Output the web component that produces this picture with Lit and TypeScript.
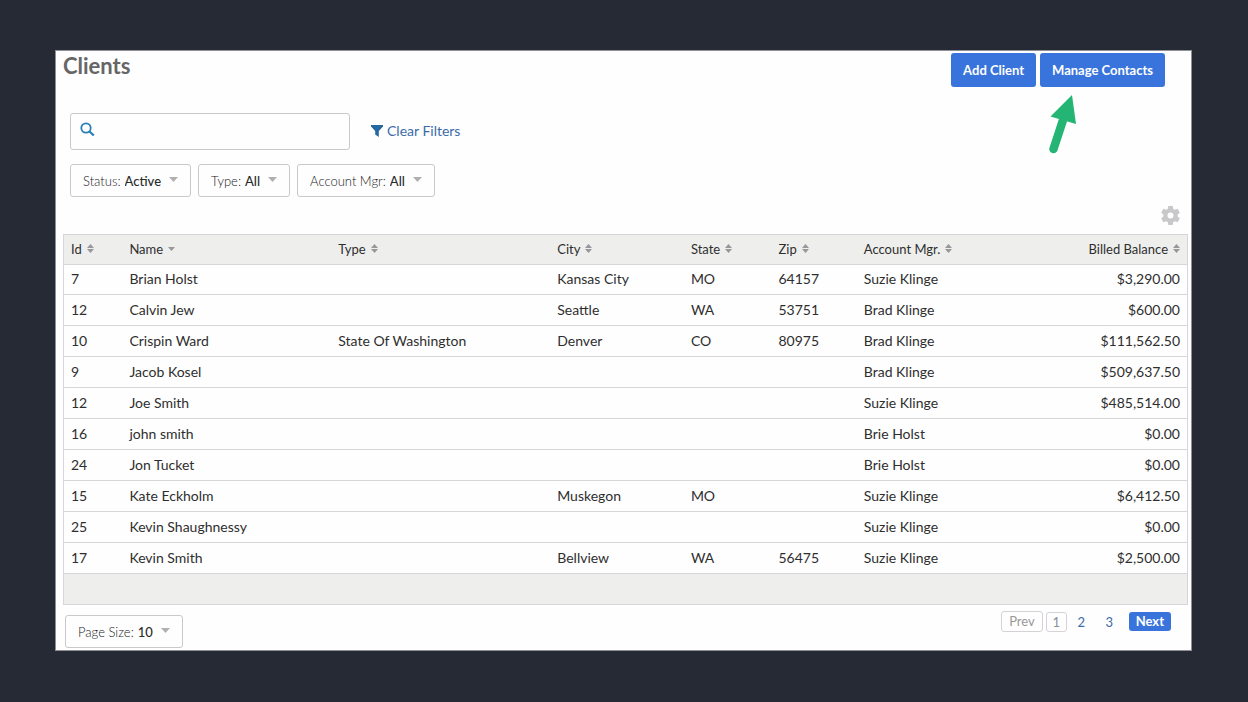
import { LitElement, html, svg, css, nothing } from "lit";
import { customElement, property, state } from "lit/decorators.js";

interface Client {
  id: number;
  name: string;
  type?: string;
  city?: string;
  state?: string;
  zip?: string;
  manager: string;
  balance: string;
}

const clients: Client[] = [
  { id: 7, name: "Brian Holst", city: "Kansas City", state: "MO", zip: "64157", manager: "Suzie Klinge", balance: "$3,290.00" },
  { id: 12, name: "Calvin Jew", city: "Seattle", state: "WA", zip: "53751", manager: "Brad Klinge", balance: "$600.00" },
  { id: 10, name: "Crispin Ward", type: "State Of Washington", city: "Denver", state: "CO", zip: "80975", manager: "Brad Klinge", balance: "$111,562.50" },
  { id: 9, name: "Jacob Kosel", manager: "Brad Klinge", balance: "$509,637.50" },
  { id: 12, name: "Joe Smith", manager: "Suzie Klinge", balance: "$485,514.00" },
  { id: 16, name: "john smith", manager: "Brie Holst", balance: "$0.00" },
  { id: 24, name: "Jon Tucket", manager: "Brie Holst", balance: "$0.00" },
  { id: 15, name: "Kate Eckholm", city: "Muskegon", state: "MO", manager: "Suzie Klinge", balance: "$6,412.50" },
  { id: 25, name: "Kevin Shaughnessy", manager: "Suzie Klinge", balance: "$0.00" },
  { id: 17, name: "Kevin Smith", city: "Bellview", state: "WA", zip: "56475", manager: "Suzie Klinge", balance: "$2,500.00" },
];

const columns = ["Id", "Name", "Type", "City", "State", "Zip", "Account Mgr.", "Billed Balance"];

@customElement("filter-select")
class FilterSelect extends LitElement {
  @property() label = "";
  @property() value = "";

  static styles = css`
    :host {
      display: block;
    }
    .box {
      display: flex;
      align-items: center;
      gap: 4px;
      height: 33px;
      box-sizing: border-box;
      padding: 0 12px;
      border: 1px solid #c9c9cb;
      border-radius: 3px;
      background: #fefefe;
      font-size: 13px;
      line-height: 16px;
      white-space: nowrap;
    }
    .name {
      font-weight: 300;
      color: #222;
    }
    .field {
      display: grid;
      align-items: center;
    }
    .field > * {
      grid-area: 1 / 1;
    }
    select {
      appearance: none;
      field-sizing: content;
      border: 0;
      margin: 0;
      padding: 0 17px 0 0;
      background: none;
      font: inherit;
      font-weight: 500;
      color: #2b2b2b;
      outline-offset: 4px;
    }
    .caret {
      justify-self: end;
      width: 9px;
      height: 5px;
      margin-bottom: 2px;
      fill: #b0b0b0;
      pointer-events: none;
    }
  `;

  render() {
    return html`
      <label class="box">
        <span class="name">${this.label}:</span>
        <span class="field">
          <select>
            <option>${this.value}</option>
          </select>
          <svg class="caret" viewBox="0 0 9 5" aria-hidden="true"><path d="M0 0h9L4.5 5z" /></svg>
        </span>
      </label>
    `;
  }
}

@customElement("app-root")
class AppRoot extends LitElement {
  @state() private page = 1;

  static styles = css`
    :host {
      display: block;
      min-height: 100vh;
      box-sizing: border-box;
      padding: 50px 56px 50px 55px;
      background: #262a35;
      font-family: Lato, "Open Sans", sans-serif;
      font-size: 14px;
      line-height: 18px;
      color: #2e2e2e;
    }
    .panel {
      background: #fefefe;
      border: 1px solid #8f9095;
      padding: 1px 3px 2px 7px;
    }
    .top {
      display: flex;
      justify-content: space-between;
      align-items: flex-start;
      padding-right: 23px;
    }
    h1 {
      margin: 0;
      font-size: 22px;
      line-height: 28px;
      font-weight: 700;
      color: #666;
    }
    .actions {
      display: flex;
      gap: 4px;
      padding-top: 1px;
    }
    .primary {
      border: 0;
      border-radius: 3px;
      background: #3874db;
      color: #fff;
      font: inherit;
      font-weight: 700;
      cursor: pointer;
    }
    .large {
      height: 34px;
      padding: 0 12px 1px;
      font-size: 13px;
    }
    .target {
      position: relative;
    }
    .pointer {
      position: absolute;
      left: 8px;
      top: 41px;
      width: 30px;
      height: 60px;
    }
    .search-row {
      display: flex;
      align-items: center;
      gap: 21px;
      padding: 26px 0 0 7px;
    }
    .search {
      display: flex;
      align-items: center;
      gap: 8px;
      box-sizing: border-box;
      width: 280px;
      height: 37px;
      padding: 0 9px;
      border: 1px solid #c9c9cb;
      border-radius: 3px;
    }
    .search svg {
      width: 15px;
      height: 15px;
      margin-bottom: 4px;
      flex: none;
    }
    .search input {
      flex: 1;
      min-width: 0;
      border: 0;
      padding: 0;
      outline: 0;
      background: none;
      font: inherit;
    }
    .clear {
      display: flex;
      align-items: center;
      gap: 4px;
      padding-bottom: 2px;
      color: #3c6ba8;
      text-decoration: none;
    }
    .clear svg {
      width: 12px;
      height: 12px;
      fill: #24689f;
    }
    .filters {
      display: flex;
      gap: 7px;
      padding: 14px 0 0 7px;
    }
    .settings {
      display: flex;
      justify-content: flex-end;
      padding: 9px 8px;
    }
    .settings button {
      display: block;
      border: 0;
      padding: 0;
      background: none;
      width: 19px;
      height: 19px;
      cursor: pointer;
    }
    .settings svg {
      display: block;
      width: 19px;
      height: 19px;
      fill: #c8c8ca;
    }
    table {
      width: 100%;
      table-layout: fixed;
      border-collapse: separate;
      border-spacing: 0;
      border: 1px solid #d5d6d9;
      border-bottom: 0;
    }
    th,
    td {
      box-sizing: border-box;
      height: 31px;
      padding: 0 7px 1px;
      border-bottom: 1px solid #d5d6d9;
      text-align: left;
      font-weight: 400;
      white-space: nowrap;
    }
    th,
    tbody tr:first-child td {
      height: 30px;
    }
    th {
      padding-bottom: 2px;
      background: #eeeeed;
      font-size: 13px;
    }
    tfoot td {
      background: #eeeeed;
    }
    .c0 { width: 5.2%; }
    .c1 { width: 18.6%; }
    .c2 { width: 19.5%; }
    .c3 { width: 11.9%; }
    .c4 { width: 7.8%; }
    .c5 { width: 7.6%; }
    .c6 { width: 14.4%; }
    .num {
      text-align: right;
    }
    .sort {
      display: inline-flex;
      align-items: center;
      gap: 5px;
      border: 0;
      padding: 0;
      background: none;
      font: inherit;
      color: inherit;
      cursor: pointer;
    }
    .sort svg {
      width: 7px;
      height: 9px;
      fill: #98989c;
    }
    .bottom {
      display: flex;
      justify-content: space-between;
      align-items: flex-start;
      padding: 6px 17px 0 2px;
    }
    .size {
      padding-top: 4px;
    }
    .pager {
      display: flex;
      align-items: center;
      gap: 3px;
      font-size: 13px;
    }
    .pager a {
      box-sizing: border-box;
      min-width: 21px;
      height: 20px;
      margin-right: 4px;
      border: 1px solid transparent;
      border-radius: 3px;
      text-align: center;
      text-decoration: none;
      color: #3c6ba8;
    }
    .pager a[aria-current] {
      border-color: #d5d2da;
      color: #8a8f9c;
      margin-right: 1px;
    }
    .prev {
      height: 21px;
      padding: 0 7px 1px;
      border: 1px solid #d5d2d6;
      border-radius: 3px;
      background: none;
      font: inherit;
      color: #999;
    }
    .next {
      height: 19px;
      padding: 0 7px 1px;
      margin-left: 2px;
    }
  `;

  private sortIcon(name: string) {
    return name === "Name"
      ? svg`<path d="M0 3h7L3.5 7z" />`
      : svg`<path d="M0 4L3.5 0L7 4zM0 5h7L3.5 9z" />`;
  }

  private go(e: Event, page: number) {
    e.preventDefault();
    this.page = page;
  }

  render() {
    return html`
      <main class="panel">
        <header class="top">
          <h1>Clients</h1>
          <div class="actions">
            <button class="primary large">Add Client</button>
            <button class="primary large target">
              Manage Contacts
              <svg class="pointer" viewBox="0 0 30 60" aria-hidden="true" fill="#24b574">
                <path d="M24 1L2.5 22.5L28 30z" />
                <path d="M17 20L5.5 55" stroke="#24b574" stroke-width="8.5" stroke-linecap="round" />
              </svg>
            </button>
          </div>
        </header>

        <div class="search-row">
          <label class="search">
            <svg viewBox="0 0 15 15" fill="none" stroke="#2a7fb9" aria-hidden="true">
              <circle cx="6" cy="6" r="4.7" stroke-width="1.8" />
              <path d="M9.5 9.5L13.8 13.5" stroke-width="2.2" />
            </svg>
            <input type="text" aria-label="Search clients" />
          </label>
          <a class="clear" href="#">
            <svg viewBox="0 0 12 12" aria-hidden="true"><path d="M0 0h12v1.5L7.8 6v6L4.2 9.5V6L0 1.5z" /></svg>
            Clear Filters
          </a>
        </div>

        <div class="filters">
          <filter-select label="Status" value="Active"></filter-select>
          <filter-select label="Type" value="All"></filter-select>
          <filter-select label="Account Mgr" value="All"></filter-select>
        </div>

        <div class="settings">
          <button aria-label="Table settings">
            <svg viewBox="2 2 20 20" aria-hidden="true">
              <path
                d="M19.43 12.98c.04-.32.07-.64.07-.98s-.03-.66-.07-.98l2.11-1.65c.19-.15.24-.42.12-.64l-2-3.46c-.12-.22-.39-.3-.61-.22l-2.49 1c-.52-.4-1.08-.73-1.69-.98l-.38-2.65C14.46 2.18 14.25 2 14 2h-4c-.25 0-.46.18-.49.42l-.38 2.65c-.61.25-1.17.59-1.69.98l-2.49-1c-.23-.09-.49 0-.61.22l-2 3.46c-.13.22-.07.49.12.64l2.11 1.65c-.04.32-.07.65-.07.98s.03.66.07.98l-2.11 1.65c-.19.15-.24.42-.12.64l2 3.46c.12.22.39.3.61.22l2.49-1c.52.4 1.08.73 1.69.98l.38 2.65c.03.24.24.42.49.42h4c.25 0 .46-.18.49-.42l.38-2.65c.61-.25 1.17-.59 1.69-.98l2.49 1c.23.09.49 0 .61-.22l2-3.46c.12-.22.07-.49-.12-.64l-2.11-1.65zM12 15.2a3.2 3.2 0 1 1 0-6.4 3.2 3.2 0 0 1 0 6.4z"
              />
            </svg>
          </button>
        </div>

        <table>
          <thead>
            <tr>
              ${columns.map(
                (name, i) => html`
                  <th class="c${i} ${i === 7 ? "num" : ""}" scope="col">
                    <button class="sort">
                      ${name}
                      <svg viewBox="0 0 7 9" aria-hidden="true">${this.sortIcon(name)}</svg>
                    </button>
                  </th>
                `
              )}
            </tr>
          </thead>
          <tbody>
            ${clients.map(
              (c) => html`
                <tr>
                  <td>${c.id}</td>
                  <td>${c.name}</td>
                  <td>${c.type ?? nothing}</td>
                  <td>${c.city ?? nothing}</td>
                  <td>${c.state ?? nothing}</td>
                  <td>${c.zip ?? nothing}</td>
                  <td>${c.manager}</td>
                  <td class="num">${c.balance}</td>
                </tr>
              `
            )}
          </tbody>
          <tfoot>
            <tr>
              <td colspan="8"></td>
            </tr>
          </tfoot>
        </table>

        <footer class="bottom">
          <filter-select class="size" label="Page Size" value="10"></filter-select>
          <nav class="pager" aria-label="Pages">
            <button class="prev" ?disabled=${this.page === 1}>Prev</button>
            ${[1, 2, 3].map(
              (n) => html`<a
                href="#"
                aria-current=${this.page === n ? "page" : nothing}
                @click=${(e: Event) => this.go(e, n)}
                >${n}</a
              >`
            )}
            <button class="primary next">Next</button>
          </nav>
        </footer>
      </main>
    `;
  }
}
